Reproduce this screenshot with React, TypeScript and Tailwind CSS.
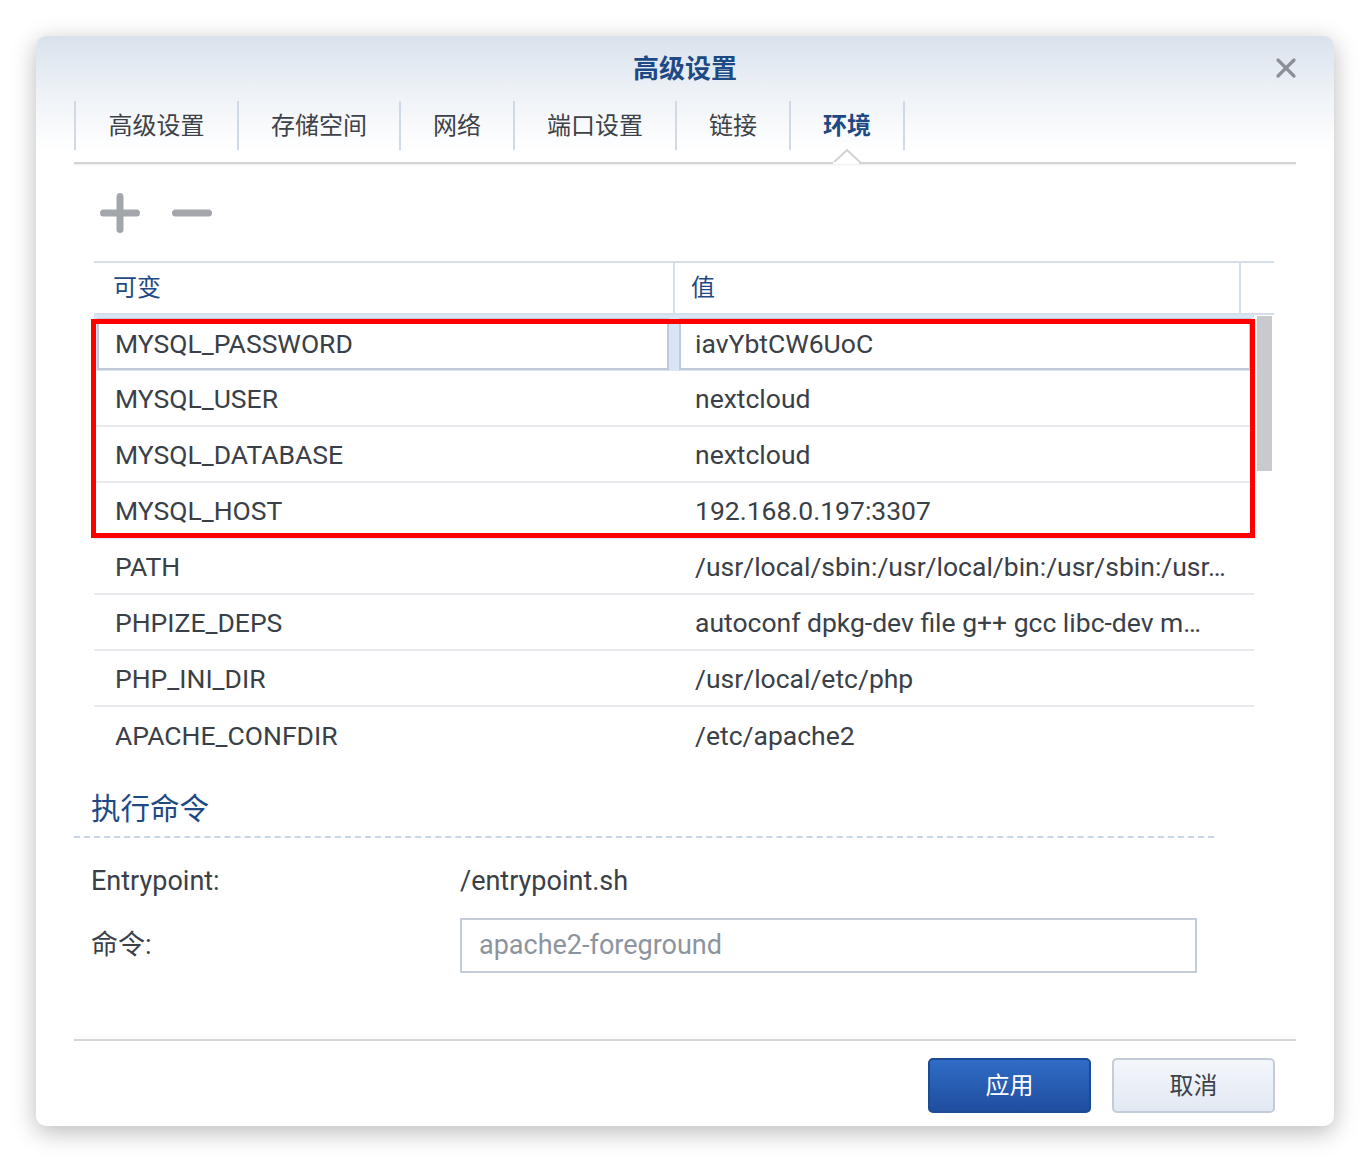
import { X } from "lucide-react";

const tabs = [
  { label: "高级设置", w: "w-[163px]" },
  { label: "存储空间", w: "w-[162px]" },
  { label: "网络", w: "w-[114px]" },
  { label: "端口设置", w: "w-[162px]" },
  { label: "链接", w: "w-[114px]" },
  { label: "环境", w: "w-[114px]", active: true },
];

const envRows = [
  { name: "MYSQL_USER", value: "nextcloud" },
  { name: "MYSQL_DATABASE", value: "nextcloud" },
  { name: "MYSQL_HOST", value: "192.168.0.197:3307" },
  { name: "PATH", value: "/usr/local/sbin:/usr/local/bin:/usr/sbin:/usr…" },
  { name: "PHPIZE_DEPS", value: "autoconf dpkg-dev file g++ gcc libc-dev m…" },
  { name: "PHP_INI_DIR", value: "/usr/local/etc/php" },
  { name: "APACHE_CONFDIR", value: "/etc/apache2" },
];

export default function App() {
  return (
    <div className="min-h-screen bg-white pl-[36px] pt-[36px] font-['Roboto','Noto_Sans_CJK_SC',sans-serif] text-[#3a4048]">
      <div className="relative h-[1090px] w-[1298px] overflow-hidden rounded-[10px] bg-white shadow-[0_6px_24px_rgba(0,0,0,0.28)]">
        {/* header */}
        <div className="bg-gradient-to-b from-[#d9e2ec] via-[#eef2f7] to-white">
          <div className="relative flex h-[65px] items-center justify-center">
            <h1 className="text-[26px] font-bold leading-none text-[#1d4a85]">高级设置</h1>
            <button type="button" className="absolute right-[32px] top-[16px] text-[#8b9097]">
              <X size={32} strokeWidth={2.4} />
            </button>
          </div>

          <div className="px-[38px]">
            <div className="flex h-[49px] border-l-2 border-[#cfdae6]">
              {tabs.map((tab) => (
                <div
                  key={tab.label}
                  className={`relative flex items-center justify-center border-r-2 border-[#cfdae6] text-[24px] ${tab.w} ${
                    tab.active ? "font-bold text-[#1d4a85]" : "text-[#3d4249]"
                  }`}
                >
                  {tab.label}
                  {tab.active && (
                    <svg
                      className="absolute left-1/2 top-[48px] -ml-[14px]"
                      width="28"
                      height="16"
                      viewBox="0 0 28 16"
                    >
                      <polygon points="0,14 14,1 28,14 28,16 0,16" fill="#ffffff" />
                      <polyline points="0,14 14,1 28,14" fill="none" stroke="#d2d2d2" strokeWidth="2" />
                    </svg>
                  )}
                </div>
              ))}
            </div>
          </div>
        </div>

        <div className="px-[38px]">
          <div className="h-[12px]" />
          <div className="relative h-[2px] bg-[#d4d4d4] shadow-[0_1px_2px_rgba(0,0,0,0.08)]">
            <div className="absolute left-[759px] top-0 h-[2px] w-[26px] bg-white" />
          </div>

          {/* toolbar */}
          <div className="flex h-[97px] items-center gap-[32px] pl-[26px]">
            <svg width="40" height="40" viewBox="0 0 40 40">
              <path d="M20 3.5 V36.5 M3.5 20 H36.5" stroke="#a3a7ac" strokeWidth="7" strokeLinecap="round" />
            </svg>
            <svg width="40" height="40" viewBox="0 0 40 40">
              <path d="M3.5 20 H36.5" stroke="#a3a7ac" strokeWidth="7" strokeLinecap="round" />
            </svg>
          </div>

          {/* table */}
          <div className="ml-[20px] w-[1180px]">
            <div className="flex h-[54px] border-y-2 border-[#d5dfea] text-[24px] text-[#1d4a85]">
              <div className="flex w-[581px] items-center border-r-2 border-[#d5dfea] pl-[19px]">可变</div>
              <div className="flex w-[566px] items-center border-r-2 border-[#d5dfea] pl-[16px]">值</div>
              <div className="flex-1" />
            </div>

            <div className="flex">
              <div className="relative w-[1160px] text-[26.5px]">
                <div className="flex h-[56px] items-start bg-[#d8e5f7] pt-[3px]">
                  <div className="ml-[3px] flex h-[52px] w-[572px] items-center border-2 border-[#c0c9d5] bg-white pl-[16px]">
                    MYSQL_PASSWORD
                  </div>
                  <div className="ml-[10px] flex h-[52px] w-[572px] items-center border-2 border-[#c0c9d5] bg-white pl-[14px]">
                    iavYbtCW6UoC
                  </div>
                </div>
                {envRows.map((row, i) => (
                  <div
                    key={row.name}
                    className={`flex h-[56px] items-center pt-[2px] ${
                      i < envRows.length - 1 ? "border-b-2 border-[#e6e9ed]" : ""
                    }`}
                  >
                    <div className="w-[581px] pl-[21px]">{row.name}</div>
                    <div className="w-[579px] truncate pl-[20px] pr-[8px]">{row.value}</div>
                  </div>
                ))}
                <div className="pointer-events-none absolute left-[-3px] top-[4px] h-[219px] w-[1164px] border-[5px] border-[#ff0000]" />
              </div>
              <div className="ml-[3px] mt-[1px] h-[155px] w-[15px] bg-[#c8cacd]" />
            </div>
          </div>

          {/* command section */}
          <div className="w-[1140px] border-b-2 border-dashed border-[#c9d6e4] pb-[9px] pl-[17px] pt-[28px] text-[29.5px] leading-[36px] text-[#1d4a85]">
            执行命令
          </div>

          <div className="grid grid-cols-[369px_737px] pl-[17px] text-[27px]">
            <div className="mt-[27px] h-[32px] leading-[32px]">Entrypoint:</div>
            <div className="mt-[27px] h-[32px] leading-[32px]">/entrypoint.sh</div>
            <div className="mt-[21px] flex h-[55px] items-center">命令:</div>
            <div className="mt-[21px] flex h-[55px] items-center border-2 border-[#c3ccd8] pl-[17px] text-[#8c949e]">
              apache2-foreground
            </div>
          </div>

          {/* footer */}
          <div className="mt-[66px] h-[2px] bg-[#d6d6d6] shadow-[0_-3px_4px_rgba(0,0,0,0.05)]" />
          <div className="flex justify-end gap-[21px] pr-[21px] pt-[17px] text-[24px]">
            <button
              type="button"
              className="flex h-[55px] w-[163px] items-center justify-center rounded-[5px] border-2 border-[#1b4b92] bg-gradient-to-b from-[#306cc6] to-[#1f4e9e] text-white"
            >
              应用
            </button>
            <button
              type="button"
              className="flex h-[55px] w-[163px] items-center justify-center rounded-[5px] border-2 border-[#c3ccd8] bg-gradient-to-b from-[#f3f7fc] to-[#e3e9f2] text-[#3d4249]"
            >
              取消
            </button>
          </div>
        </div>
      </div>
    </div>
  );
}
